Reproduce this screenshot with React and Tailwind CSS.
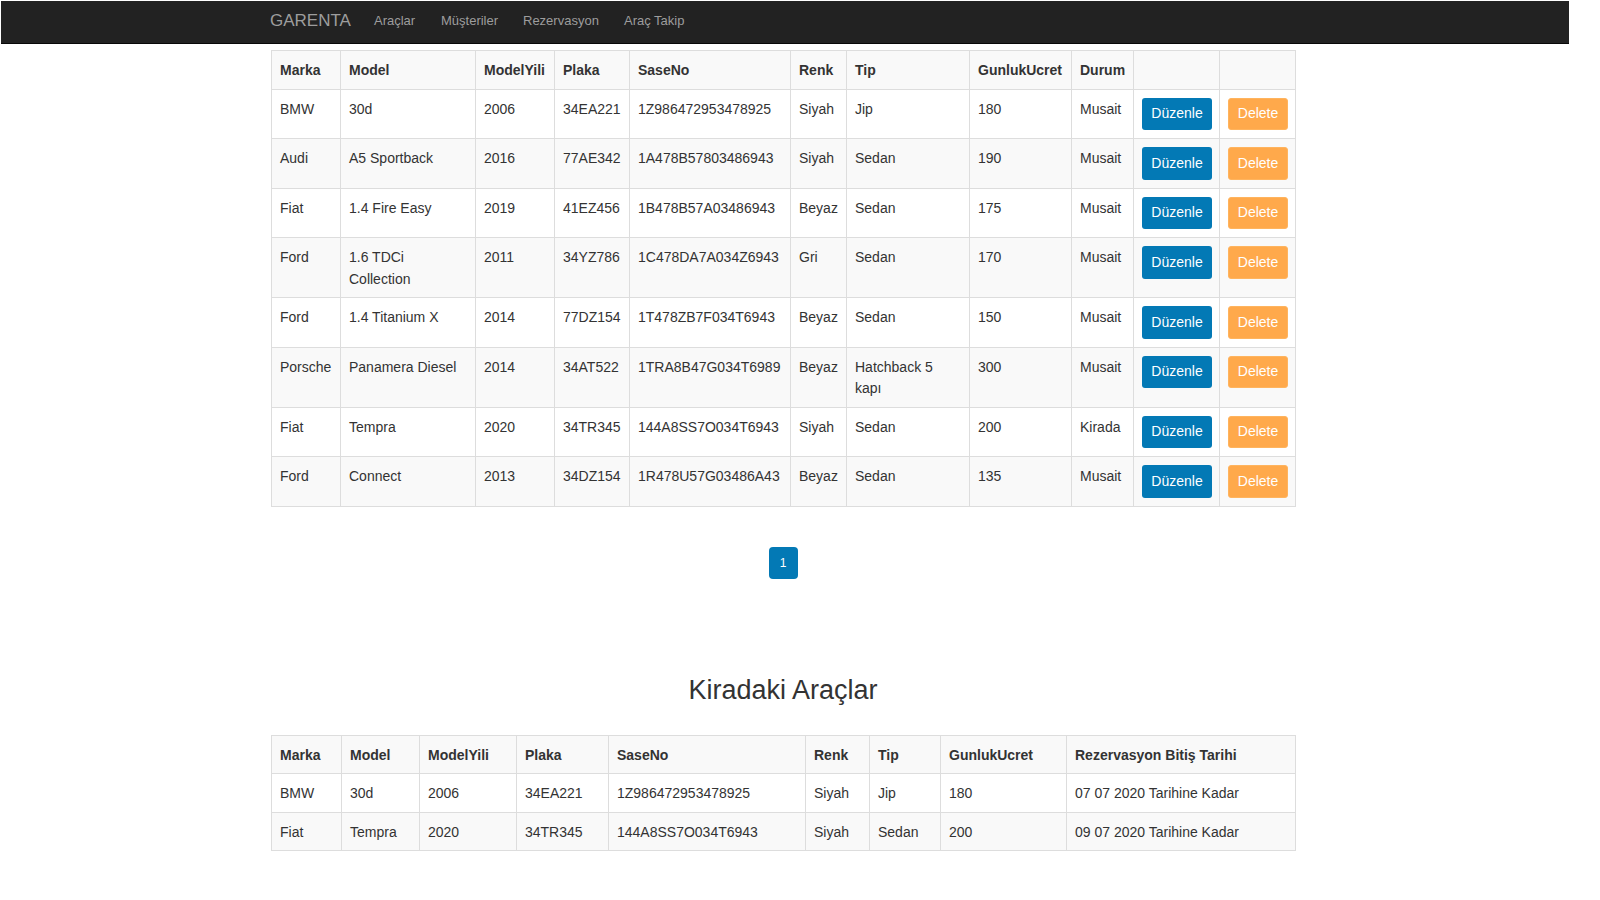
import React from "react";

const rows = [
  ["BMW", "30d", "2006", "34EA221", "1Z986472953478925", "Siyah", "Jip", "180", "Musait"],
  ["Audi", "A5 Sportback", "2016", "77AE342", "1A478B57803486943", "Siyah", "Sedan", "190", "Musait"],
  ["Fiat", "1.4 Fire Easy", "2019", "41EZ456", "1B478B57A03486943", "Beyaz", "Sedan", "175", "Musait"],
  ["Ford", ["1.6 TDCi", "Collection"], "2011", "34YZ786", "1C478DA7A034Z6943", "Gri", "Sedan", "170", "Musait"],
  ["Ford", "1.4 Titanium X", "2014", "77DZ154", "1T478ZB7F034T6943", "Beyaz", "Sedan", "150", "Musait"],
  ["Porsche", "Panamera Diesel", "2014", "34AT522", "1TRA8B47G034T6989", "Beyaz", ["Hatchback 5", "kapı"], "300", "Musait"],
  ["Fiat", "Tempra", "2020", "34TR345", "144A8SS7O034T6943", "Siyah", "Sedan", "200", "Kirada"],
  ["Ford", "Connect", "2013", "34DZ154", "1R478U57G03486A43", "Beyaz", "Sedan", "135", "Musait"],
];

const rented = [
  ["BMW", "30d", "2006", "34EA221", "1Z986472953478925", "Siyah", "Jip", "180", "07 07 2020 Tarihine Kadar"],
  ["Fiat", "Tempra", "2020", "34TR345", "144A8SS7O034T6943", "Siyah", "Sedan", "200", "09 07 2020 Tarihine Kadar"],
];

const cell = "border border-[#dddddd] px-2 pt-[9px] pb-[7px] align-top text-left leading-[21.5px] whitespace-nowrap";
const btnCell = "border border-[#dddddd] p-2 align-top";

function Val({ v }) {
  if (Array.isArray(v)) {
    return (
      <>
        {v[0]}
        <br />
        {v[1]}
      </>
    );
  }
  return v;
}

function MainTable() {
  const heads = ["Marka", "Model", "ModelYili", "Plaka", "SaseNo", "Renk", "Tip", "GunlukUcret", "Durum", "", ""];
  return (
    <table className="w-[1024px] table-fixed border-collapse">
      <colgroup>
        <col className="w-[69px]" />
        <col className="w-[135px]" />
        <col className="w-[79px]" />
        <col className="w-[75px]" />
        <col className="w-[161px]" />
        <col className="w-[56px]" />
        <col className="w-[123px]" />
        <col className="w-[102px]" />
        <col className="w-[62px]" />
        <col className="w-[86px]" />
        <col className="w-[76px]" />
      </colgroup>
      <tbody>
        <tr className="bg-[#f9f9f9]">
          {heads.map((h, i) => (
            <th key={i} className={cell + " font-bold"}>
              {h}
            </th>
          ))}
        </tr>
        {rows.map((r, i) => (
          <tr key={i} className={i % 2 === 1 ? "bg-[#f9f9f9]" : "bg-white"}>
            {r.map((v, j) => (
              <td key={j} className={cell}>
                <Val v={v} />
              </td>
            ))}
            <td className={btnCell}>
              <div className="flex h-[32.5px] w-[70px] items-center justify-center rounded-[3px] bg-[#0379b5] text-[14px] text-white">
                Düzenle
              </div>
            </td>
            <td className={btnCell}>
              <div className="flex h-[32.5px] w-[60px] items-center justify-center rounded-[3px] border border-[#ffb45e] bg-[#ffa94b] text-[14px] text-white">
                Delete
              </div>
            </td>
          </tr>
        ))}
      </tbody>
    </table>
  );
}

function RentedTable() {
  const heads = ["Marka", "Model", "ModelYili", "Plaka", "SaseNo", "Renk", "Tip", "GunlukUcret", "Rezervasyon Bitiş Tarihi"];
  return (
    <table className="w-[1024px] table-fixed border-collapse">
      <colgroup>
        <col className="w-[70px]" />
        <col className="w-[78px]" />
        <col className="w-[97px]" />
        <col className="w-[92px]" />
        <col className="w-[197px]" />
        <col className="w-[64px]" />
        <col className="w-[71px]" />
        <col className="w-[126px]" />
        <col className="w-[229px]" />
      </colgroup>
      <tbody>
        <tr className="bg-[#f9f9f9]">
          {heads.map((h, i) => (
            <th key={i} className={cell + " font-bold"}>
              {h}
            </th>
          ))}
        </tr>
        {rented.map((r, i) => (
          <tr key={i} className={i % 2 === 1 ? "bg-[#f9f9f9]" : "bg-white"}>
            {r.map((v, j) => (
              <td key={j} className={cell}>
                {v}
              </td>
            ))}
          </tr>
        ))}
      </tbody>
    </table>
  );
}

export default function App() {
  return (
    <div className="min-h-[900px] bg-white pl-px pt-px font-['Liberation_Sans',Arial,sans-serif] text-[14px] text-[#333333]">
      <nav className="flex h-[43px] w-[1568px] items-center border-b border-[#080808] bg-[#222222] pb-[3px] pl-[269px] text-[#9d9d9d]">
        <div className="w-[104px] text-[17px] leading-none">GARENTA</div>
        <div className="w-[67px] text-[13px] leading-none">Araçlar</div>
        <div className="w-[82px] text-[13px] leading-none">Müşteriler</div>
        <div className="w-[101px] text-[13px] leading-none">Rezervasyon</div>
        <div className="text-[13px] leading-none">Araç Takip</div>
      </nav>

      <main className="ml-[270px] w-[1024px] pt-[6px]">
        <MainTable />

        <div className="mt-[40px] flex justify-center">
          <div className="flex h-[32px] w-[29px] items-center justify-center rounded-[4px] bg-[#0379b5] text-[12px] text-white">
            1
          </div>
        </div>

        <h2 className="mt-[96px] text-center text-[27px] leading-[30px] font-normal text-[#333333]">
          Kiradaki Araçlar
        </h2>

        <div className="mt-[30px]">
          <RentedTable />
        </div>
      </main>
    </div>
  );
}
